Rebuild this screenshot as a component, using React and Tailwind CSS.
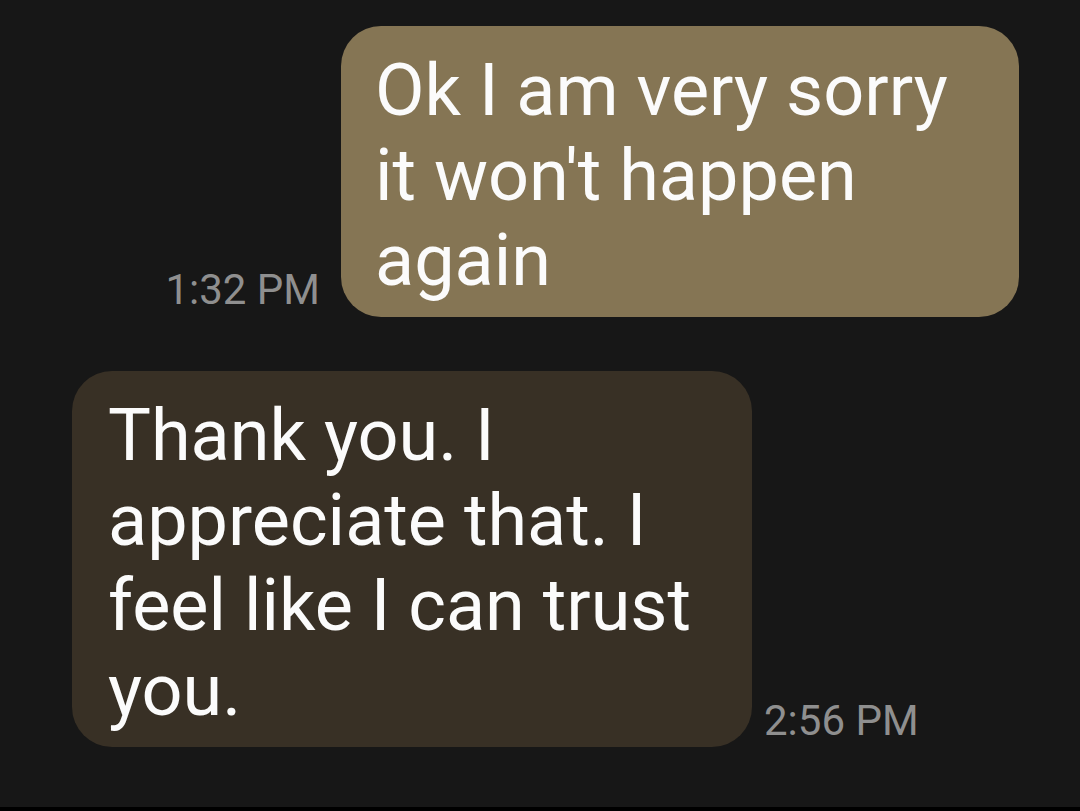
export default function App() {
  const font = { fontFamily: 'Roboto, "Noto Sans", sans-serif' };
  return (
    <div className="w-[1080px] h-[811px] flex flex-col bg-[#171717] overflow-hidden" style={font}>
      <div className="flex-1 flex flex-col pt-[26px]">
        {/* sent */}
        <div className="flex items-end justify-end pr-[61px] gap-[21px]">
          <span className="mb-[6px] text-[42px] leading-none text-[#8f8f8f]">1:32 PM</span>
          <div className="w-[678px] rounded-[40px] bg-[#857554] pl-[34px] pr-[30px] pt-[22px] pb-[14px] text-[72px] leading-[85px] text-[#fbfbfb]">
            Ok I am very sorry it won't happen again
          </div>
        </div>
        {/* received */}
        <div className="mt-[54px] flex items-end pl-[72px] gap-[12px]">
          <div className="w-[680px] rounded-[40px] bg-[#383025] pl-[36px] pr-[30px] pt-[22px] pb-[14px] text-[72px] leading-[85px] text-[#fbfbfb]">
            Thank you. I appreciate that. I feel like I can trust you.
          </div>
          <span className="mb-[5px] text-[42px] leading-none text-[#8f8f8f]">2:56 PM</span>
        </div>
      </div>
      <div className="h-[4px] bg-black" />
    </div>
  );
}
